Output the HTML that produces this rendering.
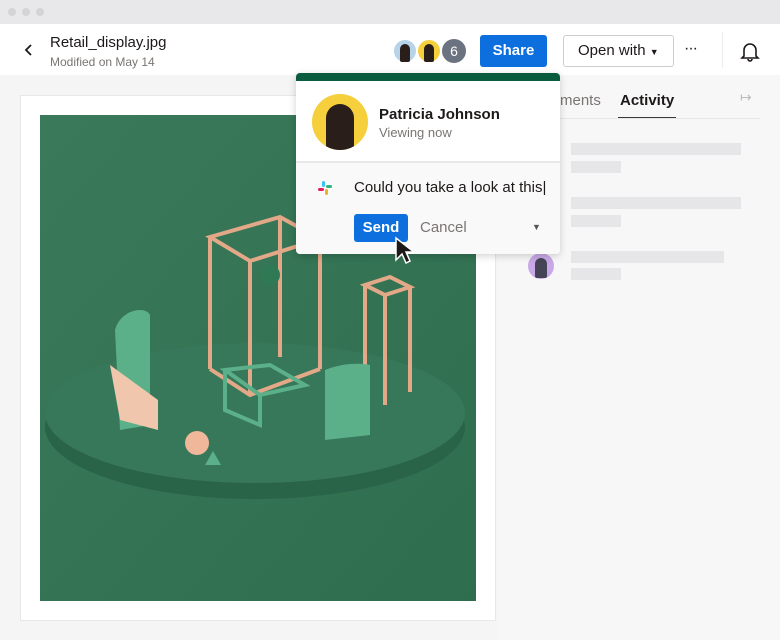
<!DOCTYPE html>
<html><head><style>
*{margin:0;padding:0;box-sizing:border-box}
body{width:780px;height:640px;overflow:hidden;background:#f5f5f6;font-family:"Liberation Sans",sans-serif;position:relative;color:#1e1919}
.abs{position:absolute}
.sk{position:absolute;background:#e6e6e8;height:12px}
</style></head><body>
<div class="abs" style="left:0;top:0;width:780px;height:24px;background:#e8e8ea"></div>
<div class="abs" style="left:8px;top:8px;width:8px;height:8px;border-radius:50%;background:#d4d4d6"></div>
<div class="abs" style="left:22px;top:8px;width:8px;height:8px;border-radius:50%;background:#d4d4d6"></div>
<div class="abs" style="left:36px;top:8px;width:8px;height:8px;border-radius:50%;background:#d4d4d6"></div>
<div class="abs" style="left:0;top:24px;width:780px;height:51px;background:#fff"></div>
<svg class="abs" style="left:24px;top:43px" width="10" height="14"><path d="M7 2L2 7l5 5" stroke="#1e1919" stroke-width="1.8" fill="none"/></svg>
<div class="abs" style="left:50px;top:34px;font-size:15px">Retail_display.jpg</div>
<div class="abs" style="left:50px;top:55px;font-size:12px;color:#7a7572">Modified on May 14</div>
<div class="abs" style="left:392px;top:38px;width:26px;height:26px;border-radius:50%;background:#b8d3e8;border:2px solid #fff"></div>
<div class="abs" style="left:400px;top:44px;width:10px;height:18px;border-radius:5px 5px 2px 2px;background:#2a1e1a"></div>
<div class="abs" style="left:416px;top:38px;width:26px;height:26px;border-radius:50%;background:#f5cf3c;border:2px solid #fff"></div>
<div class="abs" style="left:424px;top:44px;width:10px;height:18px;border-radius:5px 5px 2px 2px;background:#2a1e1a"></div>
<div class="abs" style="left:440px;top:37px;width:28px;height:28px;border-radius:50%;background:#6b7280;border:2px solid #fff;color:#fff;font-size:14px;text-align:center;line-height:24px">6</div>
<div class="abs" style="left:480px;top:35px;width:67px;height:32px;border-radius:3px;background:#0d6fde;color:#fff;font-size:15px;font-weight:bold;text-align:center;line-height:32px">Share</div>
<div class="abs" style="left:563px;top:35px;width:111px;height:32px;border-radius:3px;border:1px solid #cfcdca;font-size:15px;line-height:30px;padding-left:14px">Open with <span style="font-size:9px">▼</span></div>
<div class="abs" style="left:684px;top:40px;font-size:16px;letter-spacing:-1px">···</div>
<div class="abs" style="left:722px;top:32px;width:1px;height:36px;background:#ececec"></div>
<svg class="abs" style="left:739px;top:40px" width="22" height="22"><path d="M5 16V10a6 6 0 0 1 12 0v6l2 2H3z M9 19a2 2 0 0 0 4 0" stroke="#1e1919" stroke-width="1.6" fill="none"/></svg>
<div class="abs" style="left:20px;top:95px;width:476px;height:526px;background:#fff;border:1px solid #e8e8e8"></div>
<svg class="abs" style="left:40px;top:115px" width="436" height="486" viewBox="0 0 436 486">
<defs><linearGradient id="g" x1="0" y1="0" x2="1" y2="1"><stop offset="0" stop-color="#3a7a5a"/><stop offset="1" stop-color="#2f6d4f"/></linearGradient></defs>
<rect width="436" height="486" fill="url(#g)"/>
<ellipse cx="215" cy="312" rx="210" ry="72" fill="#2a6448"/>
<ellipse cx="215" cy="298" rx="210" ry="70" fill="#37785a"/>
<g stroke="#e3a887" stroke-width="4" fill="none"><path d="M170 122l70-20 40 22-70 22zM170 122v132M210 144v136M280 124v130M240 102v140M170 254l40 26 70-26"/><path d="M325 170l25-8 20 10-25 8zM325 170v110M345 180v110M370 172v105"/></g>
<path d="M75 215c5-20 30-25 35-15v110l-30 5z" fill="#5bb08a"/>
<path d="M70 250l10 55 38 10v-30z" fill="#f0c7ad"/>
<path d="M285 255c25-10 45-5 45-5v70l-45 5z" fill="#5bb08a"/>
<circle cx="157" cy="328" r="12" fill="#f0b79a"/>
<circle cx="230" cy="160" r="10" fill="#2f7a55"/>
<path d="M185 255l45-5 35 20-45 10z M185 255v40l35 15v-30" stroke="#5bb08a" stroke-width="4" fill="none"/>
<path d="M165 350l8-14 8 14z" fill="#5bb08a"/>
</svg>
<div class="abs" style="left:497px;top:75px;width:283px;height:565px;background:#f7f7f8"></div>
<div class="abs" style="left:560px;top:92px;font-size:15px;color:#7a7572">ments</div>
<div class="abs" style="left:620px;top:92px;font-size:15px;font-weight:bold">Activity</div>
<div class="abs" style="left:618px;top:117px;width:58px;height:2px;background:#3a3a3a"></div>
<div class="abs" style="left:560px;top:118px;width:200px;height:1px;background:#e6e6e6"></div>
<div class="abs" style="left:740px;top:89px;font-size:14px;color:#bbb">↦</div>
<div class="sk" style="left:571px;top:143px;width:170px"></div>
<div class="sk" style="left:571px;top:161px;width:50px"></div>
<div class="sk" style="left:571px;top:197px;width:170px"></div>
<div class="sk" style="left:571px;top:215px;width:50px"></div>
<div class="sk" style="left:571px;top:251px;width:153px"></div>
<div class="sk" style="left:571px;top:268px;width:50px"></div>
<div class="abs" style="left:528px;top:253px;width:26px;height:26px;border-radius:50%;background:#c8a8e6"></div>
<div class="abs" style="left:535px;top:258px;width:12px;height:20px;border-radius:6px 6px 2px 2px;background:#445"></div>
<div class="abs" style="left:296px;top:73px;width:264px;height:181px;background:#fff;border-radius:4px;box-shadow:0 2px 8px rgba(0,0,0,.18);overflow:hidden">
<div style="height:8px;background:#0b5c3f"></div>
<div class="abs" style="left:16px;top:21px;width:56px;height:56px;border-radius:50%;background:#f5cf3c;overflow:hidden"><div style="margin:10px auto 0;width:28px;height:50px;border-radius:14px 14px 4px 4px;background:#2a1e1a"></div></div>
<div class="abs" style="left:83px;top:33px;font-size:15px;font-weight:bold">Patricia Johnson</div>
<div class="abs" style="left:83px;top:52px;font-size:13px;color:#7a7572">Viewing now</div>
<div class="abs" style="left:0;top:88px;width:264px;height:93px;background:#f9f9f9;border-top:2px solid #e8e8e8"></div>
<svg class="abs" style="left:21px;top:107px" width="16" height="16" viewBox="0 0 16 16"><rect x="5" y="1" width="3" height="6" rx="1.5" fill="#36c5f0"/><rect x="9" y="5" width="6" height="3" rx="1.5" fill="#2eb67d"/><rect x="8" y="9" width="3" height="6" rx="1.5" fill="#ecb22e"/><rect x="1" y="8" width="6" height="3" rx="1.5" fill="#e01e5a"/></svg>
<div class="abs" style="left:58px;top:106px;font-size:15px">Could you take a look at this<span style="font-weight:normal">|</span></div>
<div class="abs" style="left:58px;top:141px;width:54px;height:28px;border-radius:3px;background:#0d6fde;color:#fff;font-size:15px;font-weight:bold;text-align:center;line-height:28px">Send</div>
<div class="abs" style="left:124px;top:146px;font-size:15px;color:#7a7572">Cancel</div>
<div class="abs" style="left:236px;top:149px;font-size:9px;color:#555">▼</div>
</div>
<svg class="abs" style="left:394px;top:236px" width="22" height="32"><path d="M2 2v22l6-6 4 9 4-2-4-9h8z" fill="#1e1919" stroke="#fff" stroke-width="1.5"/></svg>
</body></html>
